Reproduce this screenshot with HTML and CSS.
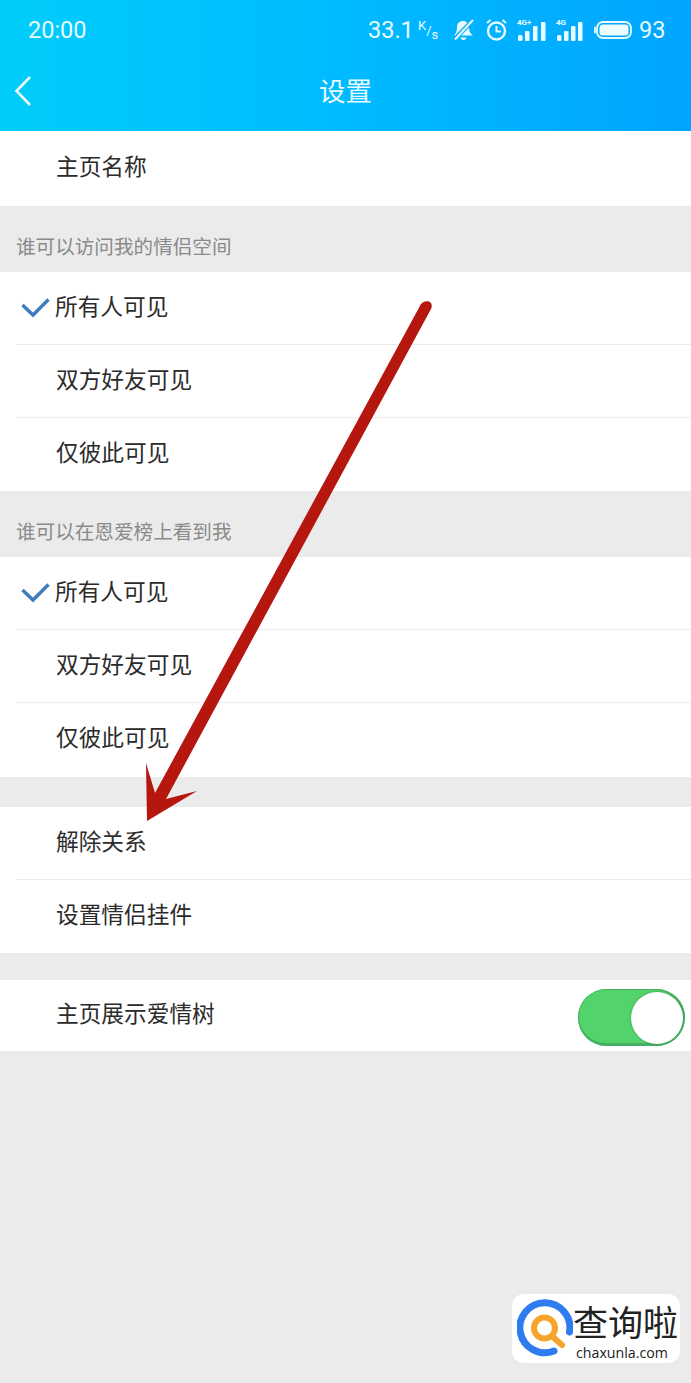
FILE: index.html
```html
<!DOCTYPE html>
<html lang="zh-CN">
<head>
    <meta charset="UTF-8">
    <meta name="viewport" content="width=device-width, initial-scale=1.0">
    <title>设置</title>
    <link rel="stylesheet" href="styles.css">
</head>
<body>
    <div class="page">
        <header class="header">
            <div class="status-bar">
                <span class="time">20:00</span>
                <div class="status-icons">
                    <span class="speed">33.1</span>
                    <span class="speed-unit"><sup>K</sup>/<sub>s</sub></span>
                    <svg class="icon-bell" width="23" height="24" viewBox="0 0 23 24">
                        <path d="M2 17.500c2-2 3-4.500 3-8.500 0-3.500 2.500-6 6-6s6 2.500 6 6c0 4 1 6.500 4 8.500z" fill="#e8fbff"/>
                        <path d="M8.500 19.500c.5 1.700 1.500 2.500 3 2.500s2.500-.8 3-2.500" fill="#e8fbff"/>
                        <path d="M1 23L22 1" stroke="#0cb0fc" stroke-width="4.500"/>
                        <path d="M3 21.500L21 2" stroke="#e8fbff" stroke-width="2"/>
                    </svg>
                    <svg class="icon-alarm" width="23" height="24" viewBox="0 0 23 24" fill="none" stroke="#e8fbff">
                        <circle cx="11.500" cy="13" r="8.500" stroke-width="2.400"/>
                        <path d="M11.500 8v5.500h4.500" stroke-width="2"/>
                        <path d="M2 5L5.500 2M21 5L17.500 2" stroke-width="2"/>
                    </svg>
                    <div class="signal">
                        <span class="net">4G+</span>
                        <svg width="29" height="19" viewBox="0 0 29 19" fill="#e8fbff">
                            <rect x="1" y="13" width="4.500" height="6" rx="1.500"/>
                            <rect x="8" y="9" width="4.500" height="10" rx="1"/>
                            <rect x="16" y="4" width="4.500" height="15" rx="1"/>
                            <rect x="24" y="0" width="4.500" height="19" rx="1"/>
                        </svg>
                    </div>
                    <div class="signal signal-last">
                        <span class="net">4G</span>
                        <svg width="27" height="19" viewBox="0 0 27 19" fill="#e8fbff">
                            <rect x="1" y="13" width="4.500" height="6" rx="1.500"/>
                            <rect x="8" y="9" width="4.500" height="10" rx="1"/>
                            <rect x="15" y="4" width="4.500" height="15" rx="1"/>
                            <rect x="22" y="0" width="4.500" height="19" rx="1"/>
                        </svg>
                    </div>
                    <svg class="icon-battery" width="38" height="18" viewBox="0 0 38 18">
                        <rect x="3" y="1" width="34" height="16" rx="6" fill="none" stroke="#e8fbff" stroke-width="1.800"/>
                        <rect x="5.500" y="3.500" width="29" height="11" rx="3.500" fill="#eefcff"/>
                        <path d="M1 6.500v5" stroke="#e8fbff" stroke-width="1.800" stroke-linecap="round"/>
                    </svg>
                    <span class="battery-level">93</span>
                </div>
            </div>
            <div class="nav-bar">
                <svg class="back" width="20" height="32" viewBox="0 0 20 32" fill="none" stroke="#e8fbff" stroke-width="2.600">
                    <path d="M17 2L3.500 16 17 30"/>
                </svg>
                <h1 class="title">设置</h1>
            </div>
        </header>

        <section class="group group-name">
            <div class="row"><span>主页名称</span></div>
        </section>

        <h2 class="group-label">谁可以访问我的情侣空间</h2>
        <section class="group">
            <div class="row row-checked">
                <svg class="check" width="29" height="20" viewBox="0 0 29 20" fill="none" stroke="#3f7cbd" stroke-width="3.400">
                    <path d="M1.500 7l10.500 10L27.500 1.500"/>
                </svg>
                <span>所有人可见</span>
            </div>
            <div class="row"><span>双方好友可见</span></div>
            <div class="row"><span>仅彼此可见</span></div>
        </section>

        <h2 class="group-label">谁可以在恩爱榜上看到我</h2>
        <section class="group group-rank">
            <div class="row row-checked">
                <svg class="check" width="29" height="20" viewBox="0 0 29 20" fill="none" stroke="#3f7cbd" stroke-width="3.400">
                    <path d="M1.500 7l10.500 10L27.500 1.500"/>
                </svg>
                <span>所有人可见</span>
            </div>
            <div class="row"><span>双方好友可见</span></div>
            <div class="row"><span>仅彼此可见</span></div>
        </section>

        <section class="group group-relation">
            <div class="row"><span>解除关系</span></div>
            <div class="row"><span>设置情侣挂件</span></div>
        </section>

        <section class="group group-tree">
            <div class="row row-switch">
                <span>主页展示爱情树</span>
                <div class="switch"><div class="knob"></div></div>
            </div>
        </section>

        <!-- annotation drawn over the screenshot -->
        <svg class="arrow" width="691" height="1383" viewBox="0 0 691 1383">
            <path d="M421 304c2-3 8-4 10-1 1 2 1 4 0 6L166 799l31-8-50 30-1-58 9 30z" fill="#b5170f"/>
        </svg>

        <div class="watermark">
            <svg class="wm-logo" width="56" height="60" viewBox="0 0 56 60" fill="none">
                <path d="M52.500 33A25 25 0 1 0 37 52" stroke="#2f7bf0" stroke-width="7" stroke-linecap="round"/>
                <circle cx="27.500" cy="29" r="10.500" stroke="#f5a42c" stroke-width="6"/>
                <path d="M36 38l9 8" stroke="#f5a42c" stroke-width="6" stroke-linecap="round"/>
            </svg>
            <div class="wm-text">
                <div class="wm-name">查询啦</div>
                <div class="wm-url">chaxunla.com</div>
            </div>
        </div>
    </div>
</body>
</html>
```
FILE: styles.css
```css
* {
    box-sizing: border-box;
}

body {
    margin: 0;
    background-color: #ebebeb;
    font-family: "Noto Sans CJK SC", "Noto Sans", sans-serif;
}

.page {
    position: relative;
    width: 691px;
    height: 1383px;
    overflow: hidden;
    background-color: #ebebeb;
}

.header {
    height: 131px;
    background: linear-gradient(90deg, #00cdfa 0%, #00baff 50%, #01a5ff 100%);
    color: #e8fbff;
}

.status-bar {
    height: 60px;
    padding: 0 28px;
    display: flex;
    align-items: center;
    justify-content: space-between;
    font-family: Roboto, sans-serif;
    font-size: 23.5px;
}

.status-icons {
    display: flex;
    align-items: center;
}

.speed {
    width: 45px;
}

.speed-unit {
    width: 20px;
    margin-left: 5px;
    margin-right: 14px;
    font-size: 13px;
    white-space: nowrap;
}

.speed-unit sup,
.speed-unit sub {
    font-size: 13px;
    line-height: 0;
}

.icon-bell {
    margin-right: 10px;
}

.icon-alarm {
    margin-right: 9px;
}

.signal {
    position: relative;
    width: 29px;
    height: 22px;
    margin-right: 10px;
    display: flex;
    align-items: flex-end;
}

.signal-last {
    width: 27px;
    margin-right: 11px;
}

.net {
    position: absolute;
    left: 0;
    top: -1px;
    font-size: 8px;
    font-weight: 700;
    line-height: 9px;
}

.icon-battery {
    margin-right: 7px;
}

.battery-level {
    width: 24px;
    text-align: right;
}

.nav-bar {
    height: 71px;
    padding-bottom: 12px;
    display: flex;
    align-items: center;
    justify-content: center;
    position: relative;
}

.back {
    position: absolute;
    left: 13px;
    top: 15px;
}

.title {
    margin: 0;
    font-size: 26.5px;
    font-weight: 400;
    line-height: 36px;
}

.group {
    background-color: #fff;
}

.group-relation {
    margin-top: 30px;
}

.group-tree {
    margin-top: 27px;
}

.group-label {
    margin: 0;
    height: 66px;
    padding: 27px 0 0 16px;
    font-size: 19.6px;
    font-weight: 400;
    line-height: 26px;
    color: #8a8a8a;
}

.row {
    position: relative;
    height: 73px;
    padding-left: 56px;
    padding-bottom: 7px;
    display: flex;
    align-items: center;
    font-size: 22.7px;
    color: #2b2b2b;
}

.row + .row::before {
    content: "";
    position: absolute;
    left: 16px;
    right: 0;
    top: -1px;
    height: 1px;
    background-color: #ececec;
}

.group-name .row {
    height: 75px;
}

.group-rank .row:last-child {
    height: 74px;
}

.row-checked {
    padding-left: 55px;
}

.check {
    position: absolute;
    left: 21px;
    top: 26px;
}

.row-switch {
    height: 71px;
    padding-right: 6px;
    justify-content: space-between;
}

.switch {
    width: 107px;
    height: 57px;
    margin-bottom: -11px;
    padding: 3px 2px;
    border-radius: 29px;
    background-color: #52d36b;
    box-shadow: inset -1px -1px 0 2px #46b060;
    display: flex;
    justify-content: flex-end;
}

.knob {
    width: 52px;
    height: 52px;
    border-radius: 50%;
    background-color: #fff;
    box-shadow: 0 0 2px rgba(30, 90, 50, 0.6);
}

.arrow {
    position: absolute;
    left: 0;
    top: 0;
}

.watermark {
    position: absolute;
    left: 512px;
    top: 1294px;
    width: 168px;
    height: 69px;
    padding-left: 5px;
    display: flex;
    align-items: center;
    background-color: #fff;
    border-radius: 12px;
}

.wm-logo {
    flex: none;
}

.wm-text {
    margin-top: 6px;
}

.wm-name {
    font-family: "Noto Sans CJK SC", sans-serif;
    font-size: 35px;
    line-height: 38px;
    color: #222;
    white-space: nowrap;
}

.wm-url {
    margin-top: 5px;
    margin-left: 3px;
    font-family: "Open Sans", sans-serif;
    font-size: 14.200px;
    line-height: 16px;
    color: #222;
    white-space: nowrap;
}
```
